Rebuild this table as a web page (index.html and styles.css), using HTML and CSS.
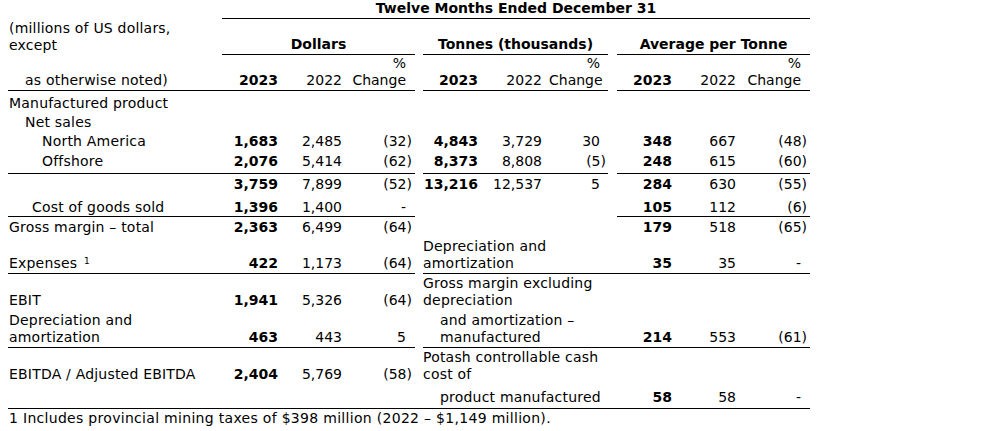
FILE: index.html
```html
<!DOCTYPE html>
<html>
<head>
<meta charset="utf-8">
<link rel="stylesheet" href="styles.css">
</head>
<body>
<table class="fin">
  <colgroup>
    <col class="c-label">
    <col class="c-23"><col class="c-22"><col class="c-chd">
    <col class="c-gap">
    <col class="c-23t"><col class="c-22"><col class="c-cht">
    <col class="c-gap2">
    <col class="c-23t"><col class="c-22"><col class="c-cha">
  </colgroup>
  <tr class="r1">
    <td></td>
    <td colspan="11" class="hd bb">Twelve Months Ended December 31</td>
  </tr>
  <tr class="r2">
    <td class="lbl">(millions of US dollars,<br>except</td>
    <td colspan="3" class="hd bb">Dollars</td>
    <td></td>
    <td colspan="3" class="hd bb">Tonnes (thousands)</td>
    <td></td>
    <td colspan="3" class="hd bb">Average per Tonne</td>
  </tr>
  <tr class="r3">
    <td class="lbl i1 bb">as otherwise noted)</td>
    <td class="num b bb">2023</td><td class="num bb">2022</td><td class="num chg bb">%<br>Change</td>
    <td></td>
    <td class="num b bb">2023</td><td class="num bb">2022</td><td class="num chg tch bb">%<br>Change</td>
    <td></td>
    <td class="num b bb">2023</td><td class="num bb">2022</td><td class="num chg bb">%<br>Change</td>
  </tr>
  <tr class="r4">
    <td class="lbl" colspan="12">Manufactured product</td>
  </tr>
  <tr class="r5">
    <td class="lbl i1" colspan="12">Net sales</td>
  </tr>
  <tr class="r6">
    <td class="lbl i2">North America</td>
    <td class="num b">1,683</td><td class="num">2,485</td><td class="num chg neg">(32)</td>
    <td></td>
    <td class="num b">4,843</td><td class="num">3,729</td><td class="num chg tch">30</td>
    <td></td>
    <td class="num b">348</td><td class="num">667</td><td class="num chg neg">(48)</td>
  </tr>
  <tr class="r7">
    <td class="lbl i2 bb">Offshore</td>
    <td class="num b bb">2,076</td><td class="num bb">5,414</td><td class="num chg neg bb">(62)</td>
    <td></td>
    <td class="num b bb">8,373</td><td class="num bb">8,808</td><td class="num chg tch neg bb">(5)</td>
    <td></td>
    <td class="num b bb">248</td><td class="num bb">615</td><td class="num chg neg bb">(60)</td>
  </tr>
  <tr class="r8">
    <td class="lbl"></td>
    <td class="num b">3,759</td><td class="num">7,899</td><td class="num chg neg">(52)</td>
    <td></td>
    <td class="num b">13,216</td><td class="num">12,537</td><td class="num chg tch">5</td>
    <td></td>
    <td class="num b">284</td><td class="num">630</td><td class="num chg neg">(55)</td>
  </tr>
  <tr class="r9">
    <td class="lbl i3 bb">Cost of goods sold</td>
    <td class="num b bb">1,396</td><td class="num bb">1,400</td><td class="num chg dash bb">-</td>
    <td></td>
    <td></td><td></td><td></td>
    <td></td>
    <td class="num b bb">105</td><td class="num bb">112</td><td class="num chg neg bb">(6)</td>
  </tr>
  <tr class="r10">
    <td class="lbl">Gross margin – total</td>
    <td class="num b">2,363</td><td class="num">6,499</td><td class="num chg neg">(64)</td>
    <td></td>
    <td></td><td></td><td></td>
    <td></td>
    <td class="num b">179</td><td class="num">518</td><td class="num chg neg">(65)</td>
  </tr>
  <tr class="r11">
    <td class="lbl bb">Expenses <span class="sup">1</span></td>
    <td class="num b bb">422</td><td class="num bb">1,173</td><td class="num chg neg bb">(64)</td>
    <td></td>
    <td colspan="3" class="mid bb">Depreciation and<br>amortization</td>
    <td class="bb"></td>
    <td class="num b bb">35</td><td class="num bb">35</td><td class="num chg dash bb">-</td>
  </tr>
  <tr class="r12">
    <td class="lbl">EBIT</td>
    <td class="num b">1,941</td><td class="num">5,326</td><td class="num chg neg">(64)</td>
    <td></td>
    <td colspan="3" class="mid">Gross margin excluding<br>depreciation</td>
    <td></td>
    <td></td><td></td><td></td>
  </tr>
  <tr class="r13">
    <td class="lbl bb">Depreciation and<br>amortization</td>
    <td class="num b bb">463</td><td class="num bb">443</td><td class="num chg bb">5</td>
    <td></td>
    <td colspan="3" class="mid i4 bb">and amortization –<br>manufactured</td>
    <td class="bb"></td>
    <td class="num b bb">214</td><td class="num bb">553</td><td class="num chg neg bb">(61)</td>
  </tr>
  <tr class="r14">
    <td class="lbl">EBITDA / Adjusted EBITDA</td>
    <td class="num b">2,404</td><td class="num">5,769</td><td class="num chg neg">(58)</td>
    <td></td>
    <td colspan="3" class="mid">Potash controllable cash<br>cost of</td>
    <td></td>
    <td></td><td></td><td></td>
  </tr>
  <tr class="r15">
    <td class="bb"></td>
    <td class="bb"></td><td class="bb"></td><td class="bb"></td>
    <td class="bb"></td>
    <td colspan="3" class="mid i4 bb">product manufactured</td>
    <td class="bb"></td>
    <td class="num b bb">58</td><td class="num bb">58</td><td class="num chg dash bb">-</td>
  </tr>
</table>
<p class="note">1 Includes provincial mining taxes of $398 million (2022 – $1,149 million).</p>
</body>
</html>
```
FILE: styles.css
```css
html, body {
  margin: 0;
  padding: 0;
  background: #fff;
}
body {
  padding-left: 8px;
  font-family: "DejaVu Sans", Verdana, sans-serif;
  font-size: 14px;
  color: #000;
}
.fin {
  border-collapse: separate;
  border-spacing: 0;
  table-layout: fixed;
  width: 802px;
  line-height: 17px;
}
.c-label { width: 214px; }
.c-23 { width: 63px; }
.c-22 { width: 64px; }
.c-chd { width: 66px; }
.c-gap { width: 8px; }
.c-23t { width: 62px; }
.c-cht { width: 59px; }
.c-gap2 { width: 9px; }
.c-cha { width: 67px; }

.fin td {
  padding: 0 0 1px 0;
  vertical-align: bottom;
  white-space: nowrap;
}
.fin td.bb {
  border-bottom: 1px solid #000;
}
.hd {
  text-align: center;
  font-weight: bold;
}
.lbl {
  padding-left: 1px !important;
  letter-spacing: 0.2px;
}
.mid {
  padding-left: 0;
  letter-spacing: 0.2px;
}
.i1 { padding-left: 17px !important; }
.i2 { padding-left: 34px !important; }
.i3 { padding-left: 24px !important; }
.i4 { padding-left: 17px !important; }
.num {
  text-align: right;
  padding-right: 7px !important;
}
.b { font-weight: bold; }
.chg { padding-right: 9px !important; }
.chg.tch { padding-right: 8px !important; }
.chg.neg { padding-right: 3px !important; }
.chg.tch.neg { padding-right: 2px !important; }
.chg.dash { padding-right: 9px !important; }
.sup {
  font-size: 9px;
  vertical-align: 4px;
  line-height: 0;
  margin-left: 2px;
}

.r1 { height: 18px; }
.r2 { height: 36px; }
.r3 { height: 36px; }
.r4 { height: 22px; }
.r5 { height: 19px; }
.r6 { height: 19px; }
.r7 { height: 23px; }
.r7 td { padding-bottom: 3px; }
.r8 { height: 20px; }
.r9 { height: 23px; }
.r9 td { padding-bottom: 0; }
.r10 { height: 20px; }
.r11 { height: 37px; }
.r12 { height: 36px; }
.r13 { height: 38px; }
.r14 { height: 36px; }
.r15 { height: 25px; }
.r15 td { padding-bottom: 2px; }

.note {
  margin: 1px 0 0 0;
  padding-left: 1px;
  line-height: 17px;
  letter-spacing: 0.3px;
}
```
